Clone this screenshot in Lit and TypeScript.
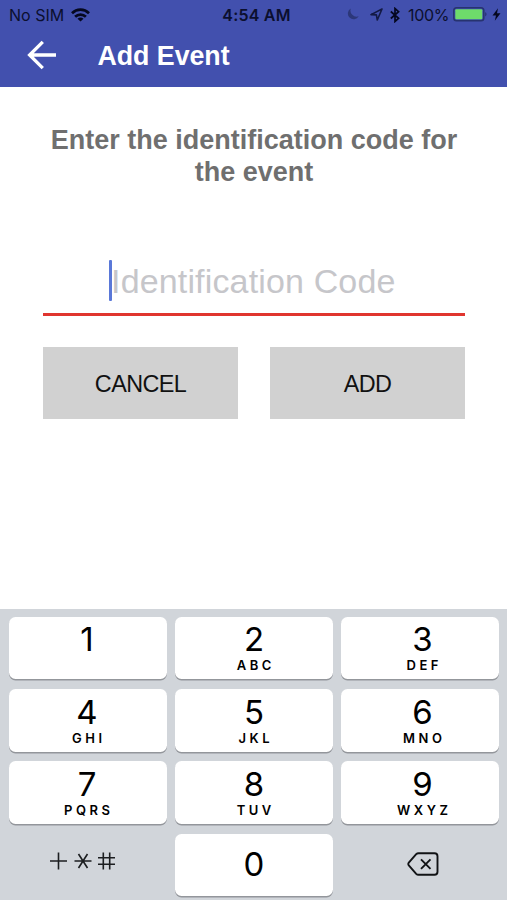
import { LitElement, html, css, nothing } from "lit";
import { customElement, property } from "lit/decorators.js";

@customElement("status-bar")
class StatusBar extends LitElement {
  static styles = css`
    :host {
      display: grid;
      grid-template-columns: 1fr auto 1fr;
      align-items: center;
      height: 30px;
      padding: 0 6px 0 9px;
      box-sizing: border-box;
      color: #0b0f2e;
      font: 400 16px/30px Inter, sans-serif;
    }
    .side { display: flex; align-items: center; height: 30px; }
    .right { justify-content: flex-end; }
    .carrier { letter-spacing: 0; }
    .wifi { margin: 0 0 1px 7px; }
    .time { font-weight: 600; letter-spacing: 0.2px; margin-left: 3px; }
    .moon { margin: 0 11px 2px 0; }
    .arrow { margin: 0 7px 2px 0; }
    .bt { margin-right: 8px; }
    .percent { letter-spacing: -0.35px; margin-right: 4px; }
    .battery { margin: 0 5px 1px 0; }
    .bolt { margin-bottom: 1px; }
    svg { display: block; flex: none; }
  `;
  render() {
    return html`
      <div class="side">
        <span class="carrier">No SIM</span>
        <svg class="wifi" width="19" height="14" viewBox="0 0 19 14" fill="none" stroke="#05081f" stroke-width="2.7">
          <path d="M1 5.2C5.8.5 13.200.5 18 5.2" />
          <path d="M4.100 8.700C7.100 5.800 11.900 5.800 14.900 8.700" />
          <path d="M9.500 13.600 6.500 10.700C8.200 9.200 10.800 9.200 12.500 10.700Z" fill="#05081f" stroke="none" />
        </svg>
      </div>
      <span class="time">4:54 AM</span>
      <div class="side right">
        <svg class="moon" width="12" height="12" viewBox="0 0 12 12" fill="#2c3779">
          <path d="M3.800.4A5.800 5.800 0 1 0 11.700 8.300 6.200 6.200 0 0 1 3.800.4Z" />
        </svg>
        <svg class="arrow" width="13" height="13" viewBox="0 0 13 13" fill="none" stroke="#131a45" stroke-width="1.600" stroke-linejoin="round">
          <path d="M12 1 1 6.600 6.400 6.900 7.300 12Z" />
        </svg>
        <svg class="bt" width="10" height="16" viewBox="0 0 10 16" fill="none" stroke="#05081f" stroke-width="1.700">
          <path d="M.8 4.500 8.600 11.300 5 14.500V1.500L8.600 4.700.8 11.500" />
        </svg>
        <span class="percent">100%</span>
        <svg class="battery" width="34" height="15" viewBox="0 0 34 15">
          <rect x=".8" y=".8" width="30" height="13" rx="2.800" fill="none" stroke="#27336f" stroke-width="1.500" />
          <rect x="2.300" y="2.300" width="27" height="10" rx="1" fill="#6edb6b" />
          <path d="M32.200 5.100C34 5.800 34 8.800 32.200 9.500Z" fill="#27336f" />
        </svg>
        <svg class="bolt" width="9" height="13" viewBox="0 0 9 13" fill="#05081f">
          <path d="M6 .2.5 7.400H4L2.800 12.800 8.500 5.300H5Z" />
        </svg>
      </div>
    `;
  }
}

@customElement("pad-key")
class PadKey extends LitElement {
  @property() digit = "";
  @property() letters = "";
  static styles = css`
    :host {
      display: flex;
      flex-direction: column;
      align-items: center;
      box-sizing: border-box;
      padding-top: 3px;
      background: #fff;
      border-radius: 6.500px;
      box-shadow: 0 1.500px 0 #93969b;
      color: #000;
      font-family: Inter, sans-serif;
    }
    :host([row="1"]), :host([row="2"]) { padding-top: 4px; }
    :host([column="0"]) { padding-right: 2px; }
    :host([column="2"]) { padding-left: 5px; }
    :host([solo]) { padding-top: 11px; }
    .digit { font-size: 33px; line-height: 38px; font-weight: 400; }
    .letters {
      font-size: 13px;
      line-height: 15px;
      font-weight: 600;
      letter-spacing: 3.500px;
      margin-right: -3.500px;
    }
  `;
  render() {
    return html`<span class="digit">${this.digit}</span>${this.letters
        ? html`<span class="letters">${this.letters}</span>`
        : nothing}`;
  }
}

const KEYS: [string, string][] = [
  ["1", ""], ["2", "ABC"], ["3", "DEF"],
  ["4", "GHI"], ["5", "JKL"], ["6", "MNO"],
  ["7", "PQRS"], ["8", "TUV"], ["9", "WXYZ"],
];

@customElement("app-root")
class AppRoot extends LitElement {
  static styles = css`
    :host {
      display: flex;
      flex-direction: column;
      height: 900px;
      background: #fff;
      overflow: hidden;
      font-family: "Liberation Sans", Arial, sans-serif;
    }
    header { height: 87px; background: #4250ae; flex: none; }
    .bar { display: flex; align-items: center; height: 50px; padding-left: 26.500px; }
    .back { display: block; margin-right: 41px; }
    h1 { margin: 2px 0 0; font-size: 26.800px; line-height: 32px; color: #fff; font-weight: 700; letter-spacing: -0.050px; }
    main { flex: 1; padding: 37px 42px 0 43px; }
    .prompt {
      margin: 0 -20px;
      text-align: center;
      font-size: 27px;
      line-height: 32px;
      font-weight: 700;
      color: #6f6f6f;
    }
    .field {
      display: flex;
      align-items: center;
      justify-content: center;
      height: 41px;
      margin-top: 72px;
      padding: 0 3px 12px 0;
      border-bottom: 3px solid #e0352f;
    }
    .caret { width: 2.600px; height: 41px; margin-right: -1px; border-radius: 1px; background: #5a78d8; }
    .placeholder { font-size: 34px; line-height: 41px; padding-top: 1px; letter-spacing: 0.150px; color: #c6c6ca; white-space: nowrap; }
    .actions { display: grid; grid-template-columns: 1fr 1fr; gap: 32px; margin-top: 31px; }
    .action {
      height: 71.500px;
      padding: 2px 0 0;
      border: 0;
      background: #d1d1d1;
      color: #111;
      font: 400 23.400px/28px "Liberation Sans", Arial, sans-serif;
      letter-spacing: -0.600px;
    }
    .pad {
      display: grid;
      flex: none;
      height: 291px;
      box-sizing: border-box;
      grid-template-columns: repeat(3, 1fr);
      grid-template-rows: 62px 63px 63px 62px;
      gap: 9.700px 8px;
      padding: 8px 8px 0 9px;
      background: #d1d5da;
    }
    .plain { display: flex; align-items: center; justify-content: center; }
    svg { display: block; }
    .symbols { margin: 0 0 8px -10px; }
    .delete { margin: 0 0 3px 6px; }
  `;
  render() {
    return html`
      <header>
        <status-bar></status-bar>
        <div class="bar">
          <svg class="back" width="30" height="30" viewBox="0 0 30 30" fill="none" stroke="#fff" stroke-width="3.300">
            <path d="M15.800 1.800 2.600 15 15.800 28.200M2.600 15H29" />
          </svg>
          <h1>Add Event</h1>
        </div>
      </header>
      <main>
        <p class="prompt">Enter the identification code for<br />the event</p>
        <div class="field">
          <span class="caret"></span>
          <span class="placeholder">Identification Code</span>
        </div>
        <div class="actions">
          <button class="action">CANCEL</button>
          <button class="action">ADD</button>
        </div>
      </main>
      <section class="pad">
        ${KEYS.map(
          ([d, l], i) => html`<pad-key digit=${d} letters=${l} row=${Math.floor(i / 3)} column=${i % 3}></pad-key>`
        )}
        <div class="plain">
          <svg class="symbols" width="68" height="20" viewBox="0 0 68 20" fill="none" stroke="#1c1e20" stroke-width="1.600">
            <path d="M1 10H18M9.500 1.500V18.500" />
            <path d="M25.500 10H42.500M29.500 3 38.500 17M38.500 3 29.500 17" />
            <path d="M49 6.800H66M49 13.200H66M54.300 1.500V18.500M60.700 1.500V18.500" />
          </svg>
        </div>
        <pad-key digit="0" solo></pad-key>
        <div class="plain">
          <svg class="delete" width="32" height="24" viewBox="0 0 32 24" fill="none" stroke="#111315" stroke-width="1.900" stroke-linejoin="round">
            <path d="M11.500 1.200H27.500Q30.500 1.200 30.500 4.200V19.800Q30.500 22.800 27.500 22.800H11.500Q10.200 22.800 9.200 21.800L1.800 13.300Q.8 12 1.800 10.700L9.200 2.200Q10.200 1.200 11.500 1.200Z" />
            <path d="M14 7.300 23.500 16.800M23.500 7.300 14 16.800" />
          </svg>
        </div>
      </section>
    `;
  }
}
